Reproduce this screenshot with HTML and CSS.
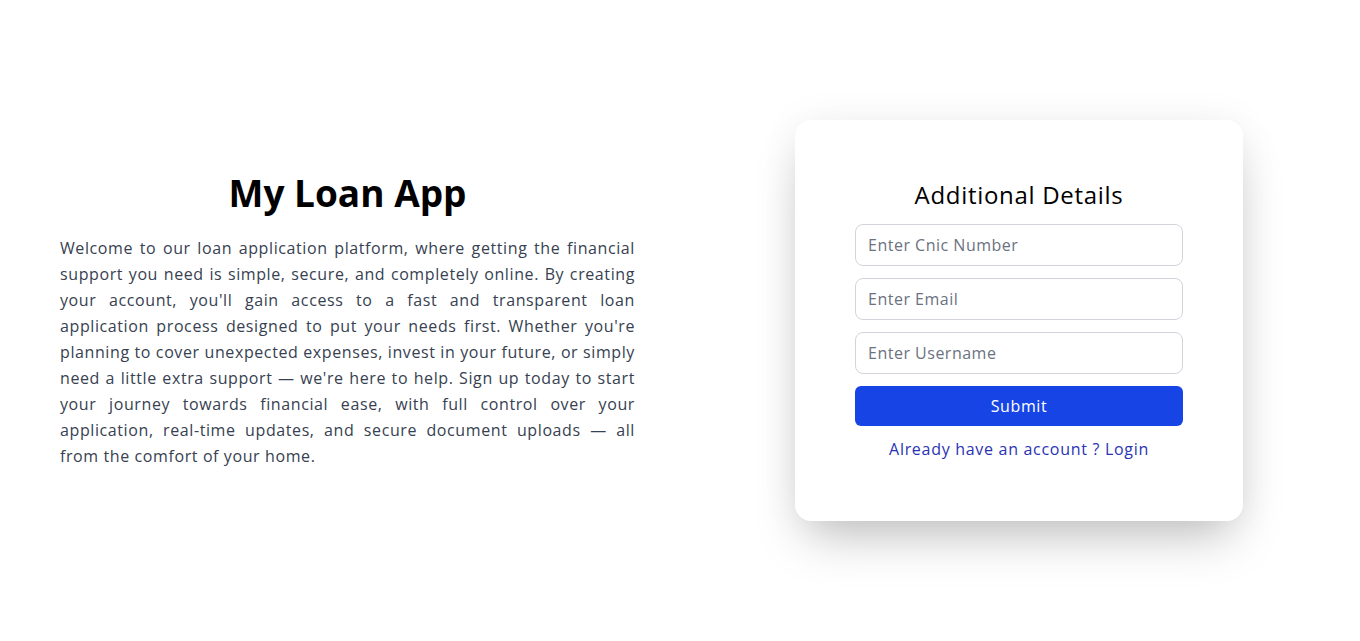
FILE: index.html
```html
<!DOCTYPE html>
<html lang="en">
<head>
<meta charset="utf-8">
<title>My Loan App</title>
<link rel="stylesheet" href="styles.css">
</head>
<body>
<main class="page">
  <section class="intro">
    <h1 class="intro-title">My Loan App</h1>
    <p class="intro-text">Welcome to our loan application platform, where getting the financial support you need is simple, secure, and completely online. By creating your account, you'll gain access to a fast and transparent loan application process designed to put your needs first. Whether you're planning to cover unexpected expenses, invest in your future, or simply need a little extra support — we're here to help. Sign up today to start your journey towards financial ease, with full control over your application, real-time updates, and secure document uploads — all from the comfort of your home.</p>
  </section>
  <section class="card">
    <h2 class="card-title">Additional Details</h2>
    <form class="form">
      <input class="field" type="text" placeholder="Enter Cnic Number">
      <input class="field" type="email" placeholder="Enter Email">
      <input class="field" type="text" placeholder="Enter Username">
      <button class="submit" type="button">Submit</button>
    </form>
    <a class="login-link" href="#">Already have an account ? Login</a>
  </section>
</main>
</body>
</html>
```
FILE: styles.css
```css
* { box-sizing: border-box; }
html, body { margin: 0; padding: 0; background: #fff; }
body { font-family: "Open Sans", "DejaVu Sans", sans-serif; color: #111; }

.page {
  min-height: 641px;
  display: flex;
  align-items: center;
  padding: 0 117px 0 60px;
  gap: 160px;
}

.intro { width: 575px; flex: none; }
.intro-title {
  margin: 0 0 21px;
  text-align: center;
  font-size: 37px;
  font-weight: 700;
  line-height: 42px;
  color: #000;
}
.intro-text {
  margin: 0;
  font-size: 16px;
  line-height: 26px;
  letter-spacing: 0.6px;
  text-align: justify;
  color: #374151;
}

.card {
  width: 448px;
  flex: none;
  background: #fff;
  border-radius: 16px;
  padding: 57px 60px 60px;
  box-shadow: 0 25px 50px -12px rgba(0, 0, 0, 0.25), 0 0 40px rgba(0, 0, 0, 0.05);
  display: flex;
  flex-direction: column;
  align-items: center;
}
.card-title {
  margin: 0 0 11px;
  font-size: 24px;
  font-weight: 400;
  line-height: 36px;
  letter-spacing: 0.7px;
  color: #000;
}
.form { width: 100%; display: flex; flex-direction: column; gap: 12px; }
.field {
  height: 42px;
  width: 100%;
  border: 1px solid #d1d5db;
  border-radius: 8px;
  padding: 0 12px;
  font-family: inherit;
  font-size: 16px;
  letter-spacing: 0.5px;
  color: #111;
  outline: none;
}
.field::placeholder { color: #6b7280; }
.submit {
  height: 40px;
  border: none;
  border-radius: 6px;
  background: #1745e5;
  color: #fff;
  font-family: inherit;
  font-size: 16px;
  font-weight: 500;
  letter-spacing: 0.6px;
}
.login-link {
  margin-top: 11px;
  font-size: 16px;
  line-height: 24px;
  letter-spacing: 0.7px;
  color: #2a33b3;
  text-decoration: none;
}
```
